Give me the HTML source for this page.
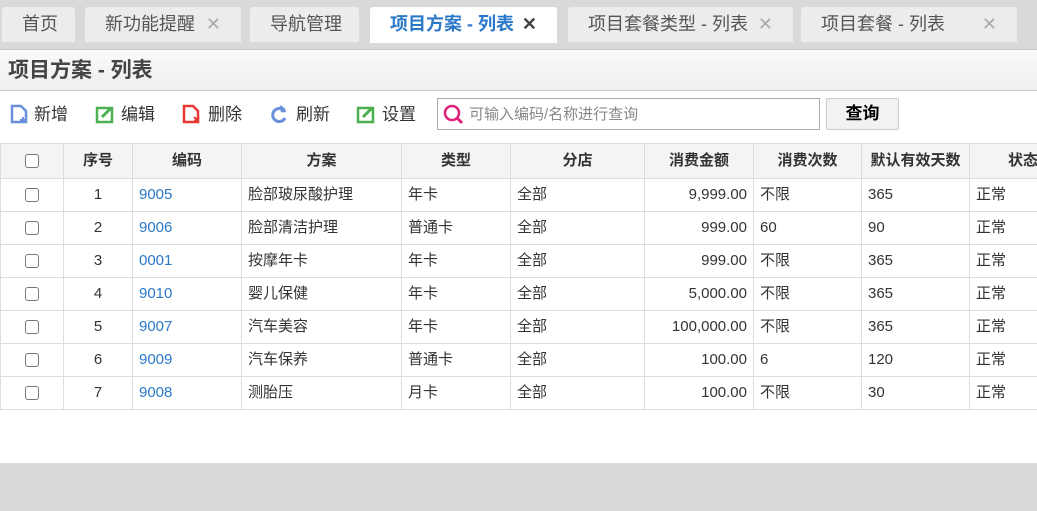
<!DOCTYPE html><html><head><meta charset="utf-8"><style>
*{box-sizing:border-box;margin:0;padding:0}
body{width:1037px;height:511px;overflow:hidden;background:#d9d9d9;font-family:"Liberation Sans","Noto Sans CJK SC",sans-serif;position:relative}
.tab{position:absolute;top:7px;height:35px;background:#ececec;border-radius:3px 3px 0 0;font-size:18px;color:#555;line-height:34px;padding-left:20px}
.tab .x{position:absolute;right:20px;color:#aaa;font-size:18px}
.act{background:#fff;color:#2a78c8;font-weight:bold;height:36px}
.act .x{color:#444}
.main{position:absolute;top:49px;left:0;width:1037px;height:414px;background:#fff}
.hd{height:42px;background:linear-gradient(#fafafa,#eee);border-top:1px solid #ccc;border-bottom:1px solid #ccc;font-size:21px;font-weight:bold;color:#444;padding:8px 8px;line-height:26px}
.tb{position:absolute;top:51px;height:30px;font-size:17px;color:#333;line-height:30px}
.tb svg{vertical-align:-4px;margin-right:6px}
table{position:absolute;top:94px;left:0;border-collapse:collapse;table-layout:fixed;width:1050px;font-size:15px;color:#333}
td,th{border:1px solid #ddd;height:33px;padding:0 6px;white-space:nowrap;overflow:hidden;line-height:20px;vertical-align:middle}
th{height:35px;background:#f4f4f4;font-weight:bold;color:#333;text-align:center}
td.c{text-align:center}td.r{text-align:right}td.b{color:#2a78c8}
.cb{display:inline-block;width:14px;height:14px;border:1px solid #777;border-radius:3px;vertical-align:middle;background:#fff}
</style></head><body>
<div class="tab" style="left:2px;width:73px">首页</div>
<div class="tab" style="left:85px;width:156px">新功能提醒<span class="x">✕</span></div>
<div class="tab" style="left:250px;width:109px">导航管理</div>
<div class="tab act" style="left:370px;width:187px">项目方案 - 列表<span class="x">✕</span></div>
<div class="tab" style="left:568px;width:225px">项目套餐类型 - 列表<span class="x">✕</span></div>
<div class="tab" style="left:801px;width:216px">项目套餐 - 列表<span class="x">✕</span></div>
<div class="main">
<div class="hd">项目方案 - 列表</div>
<div class="tb" style="left:10px"><svg width="18" height="20"><path d="M2 2h9l5 5v11H2z" fill="none" stroke="#6a8fdc" stroke-width="2.5"/><path d="M13 13v6M10 16h6" stroke="#6a8fdc" stroke-width="2"/></svg>新增</div>
<div class="tb" style="left:95px"><svg width="20" height="20"><rect x="2" y="4" width="15" height="14" fill="none" stroke="#4caf50" stroke-width="2.5"/><path d="M7 13l9-9" stroke="#4caf50" stroke-width="3"/></svg>编辑</div>
<div class="tb" style="left:182px"><svg width="20" height="20"><path d="M2 2h9l5 5v11H2z" fill="none" stroke="#e53935" stroke-width="2.5"/><path d="M12 13l5 5M17 13l-5 5" stroke="#e53935" stroke-width="2"/></svg>删除</div>
<div class="tb" style="left:270px"><svg width="20" height="20"><path d="M15 8A6.5 6.5 0 1 0 15 14" fill="none" stroke="#6a8fdc" stroke-width="3"/><path d="M10 2l4 3-3 3" fill="none" stroke="#6a8fdc" stroke-width="2"/></svg>刷新</div>
<div class="tb" style="left:356px"><svg width="20" height="20"><rect x="2" y="4" width="15" height="14" fill="none" stroke="#4caf50" stroke-width="2.5"/><path d="M7 13l9-9" stroke="#4caf50" stroke-width="3"/></svg>设置</div>
<div style="position:absolute;left:437px;top:49px;width:383px;height:32px;border:1px solid #aaa;font-size:15px;color:#888;line-height:32px;padding-left:31px"><svg style="position:absolute;left:5px;top:5px" width="22" height="22"><circle cx="9" cy="9" r="7" fill="none" stroke="#e0207a" stroke-width="2.5"/><path d="M14 14l5 5" stroke="#e0207a" stroke-width="3"/></svg>可输入编码/名称进行查询</div>
<div style="position:absolute;left:826px;top:49px;width:73px;height:32px;border:1px solid #ccc;border-radius:2px;background:#f2f2f2;font-size:17px;font-weight:bold;text-align:center;line-height:30px;color:#000">查询</div>
<table>
<colgroup><col style="width:63px"><col style="width:69px"><col style="width:109px"><col style="width:160px"><col style="width:109px"><col style="width:134px"><col style="width:109px"><col style="width:108px"><col style="width:108px"><col style="width:81px"></colgroup>
<tr><th><span class="cb"></span></th><th>序号</th><th>编码</th><th>方案</th><th>类型</th><th>分店</th><th>消费金额</th><th>消费次数</th><th>默认有效天数</th><th style="text-align:left;padding-left:38px">状态</th></tr>
<tr><td class="c"><span class="cb"></span></td><td class="c">1</td><td class="b">9005</td><td>脸部玻尿酸护理</td><td>年卡</td><td>全部</td><td class="r">9,999.00</td><td>不限</td><td>365</td><td>正常</td></tr>
<tr><td class="c"><span class="cb"></span></td><td class="c">2</td><td class="b">9006</td><td>脸部清洁护理</td><td>普通卡</td><td>全部</td><td class="r">999.00</td><td>60</td><td>90</td><td>正常</td></tr>
<tr><td class="c"><span class="cb"></span></td><td class="c">3</td><td class="b">0001</td><td>按摩年卡</td><td>年卡</td><td>全部</td><td class="r">999.00</td><td>不限</td><td>365</td><td>正常</td></tr>
<tr><td class="c"><span class="cb"></span></td><td class="c">4</td><td class="b">9010</td><td>婴儿保健</td><td>年卡</td><td>全部</td><td class="r">5,000.00</td><td>不限</td><td>365</td><td>正常</td></tr>
<tr><td class="c"><span class="cb"></span></td><td class="c">5</td><td class="b">9007</td><td>汽车美容</td><td>年卡</td><td>全部</td><td class="r">100,000.00</td><td>不限</td><td>365</td><td>正常</td></tr>
<tr><td class="c"><span class="cb"></span></td><td class="c">6</td><td class="b">9009</td><td>汽车保养</td><td>普通卡</td><td>全部</td><td class="r">100.00</td><td>6</td><td>120</td><td>正常</td></tr>
<tr><td class="c"><span class="cb"></span></td><td class="c">7</td><td class="b">9008</td><td>测胎压</td><td>月卡</td><td>全部</td><td class="r">100.00</td><td>不限</td><td>30</td><td>正常</td></tr>
</table>
</div>
</body></html>
